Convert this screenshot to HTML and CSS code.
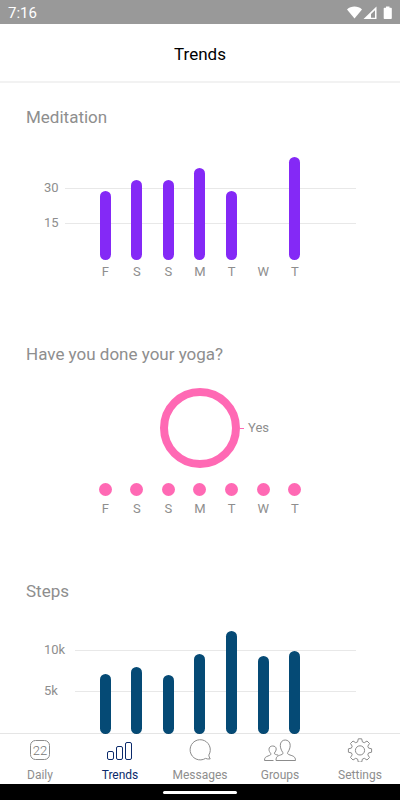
FILE: index.html
```html
<!DOCTYPE html>
<html lang="en">
<head>
  <meta charset="UTF-8">
  <meta name="viewport" content="width=device-width, initial-scale=1.0">
  <title>Trends</title>
  <link rel="stylesheet" href="styles.css">
</head>
<body>
  <div class="status">
    <span>7:16</span>
    <svg class="status-icons" width="46" height="14" viewBox="0 0 46 14" fill="#fff" aria-hidden="true">
      <path d="M0 3.400C4.200-.4 10.800-.4 15 3.400L7.500 12.600z"/>
      <path d="M29.500.500V13H16.500zM28 4.200l-4 3.900v3.600h4z" fill-rule="evenodd"/>
      <path d="M39 .500h3.500v1.300h1.500q.8 0 .8.800v9.600q0 .8-.8.800h-6.500q-.8 0-.8-.8V2.600q0-.8.8-.8h1.500z"/>
    </svg>
  </div>
  <header class="header">
    <h1>Trends</h1>
  </header>

  <main class="content">
    <section>
      <h2>Meditation</h2>
      <div class="chart">
        <div class="axis minutes">
          <div class="tick"><span>30</span></div>
          <div class="tick"><span>15</span></div>
        </div>
        <div class="bars purple">
          <div style="height: 67%"></div>
          <div style="height: 78%"></div>
          <div style="height: 78%"></div>
          <div style="height: 89%"></div>
          <div style="height: 67%"></div>
          <div style="height: 0%"></div>
          <div style="height: 100%"></div>
        </div>
      </div>
      <div class="days">
        <span>F</span><span>S</span><span>S</span><span>M</span><span>T</span><span>W</span><span>T</span>
      </div>
    </section>

    <section>
      <h2>Have you done your yoga?</h2>
      <div class="answer">
        <div class="ring"></div>
        <div class="legend">Yes</div>
      </div>
      <div class="dots">
        <i></i><i></i><i></i><i></i><i></i><i></i><i></i>
      </div>
      <div class="days">
        <span>F</span><span>S</span><span>S</span><span>M</span><span>T</span><span>W</span><span>T</span>
      </div>
    </section>

    <section>
      <h2>Steps</h2>
      <div class="chart">
        <div class="axis steps">
          <div class="tick"><span>10k</span></div>
          <div class="tick"><span>5k</span></div>
        </div>
        <div class="bars blue">
          <div style="height: 58%"></div>
          <div style="height: 65%"></div>
          <div style="height: 57%"></div>
          <div style="height: 78%"></div>
          <div style="height: 100%"></div>
          <div style="height: 76%"></div>
          <div style="height: 81%"></div>
        </div>
      </div>
    </section>
  </main>

  <nav class="tabs">
    <a href="#daily">
      <svg width="34" height="24" viewBox="0 0 34 24">
        <rect x="7.500" y="2.500" width="19" height="19" rx="5"/>
        <text x="17" y="16.500">22</text>
      </svg>
      Daily
    </a>
    <a href="#trends" class="active">
      <svg width="34" height="24" viewBox="0 0 34 24">
        <rect x="4.500" y="13.500" width="6" height="8" rx="1.500"/>
        <rect x="13.500" y="8.500" width="6" height="13" rx="1.500"/>
        <rect x="22.500" y="4.500" width="6" height="17" rx="1.500"/>
      </svg>
      Trends
    </a>
    <a href="#messages">
      <svg width="34" height="24" viewBox="0 0 34 24">
        <path d="M22.500 20.400A10.100 10.100 0 1 1 25.800 17.100Q26 19 27.200 20.900Q24.500 21.300 22.500 20.400z"/>
      </svg>
      Messages
    </a>
    <a href="#groups">
      <svg width="34" height="24" viewBox="0 0 34 24">
        <path d="M13 22.500C13 18.500 14.500 18 17.500 17C20 16.200 20.300 15.500 19.800 14.500C18.300 12.300 17.300 9.800 17.300 7.300C17.300 4 19.500 2 22.200 2S27.200 4 27.200 7.300C27.200 9.800 26.200 12.300 24.700 14.500C24.200 15.500 24.500 16.200 27 17C30 18 32.500 18.500 32.500 22.500z"/>
        <path d="M15.300 17.200C13 16.500 10.900 16.300 11.400 15C12.400 13.700 13.200 12.500 13.200 11C13.200 9 11.600 8 9.700 8S6 9 6 11.300C6 13 6.700 14.200 7.700 15.300C8.300 16.800 7.300 17.200 5 18C2.500 19 1.500 19.500 1.500 22.500H10.500"/>
      </svg>
      Groups
    </a>
    <a href="#settings">
      <svg width="34" height="24" viewBox="0 0 34 24">
        <path d="M15.300.800h3.400l.7 3.100 1.900.8 2.700-1.700 2.500 2.500-1.700 2.700.8 1.900 3 .7v3.400l-3 .7-.8 1.900 1.700 2.700-2.500 2.500-2.700-1.700-1.900.8-.7 3h-3.400l-.7-3-1.900-.8-2.700 1.700-2.500-2.500 1.700-2.700-.8-1.900-3-.7v-3.400l3-.7.8-1.900-1.700-2.700 2.500-2.500 2.700 1.700 1.900-.8z"/>
        <circle cx="17" cy="12.400" r="4.600"/>
      </svg>
      Settings
    </a>
  </nav>
  <div class="system-bar"><span></span></div>
</body>
</html>
```

FILE: styles.css
```css
* {
  box-sizing: border-box;
}
body {
  margin: 0;
  height: 100vh;
  display: flex;
  flex-direction: column;
  background: #fff;
  color: #8e8e8e;
  font-family: Roboto, sans-serif;
  font-size: 13px;
  line-height: 16px;
}
h1, h2 {
  margin: 0;
  font-weight: 400;
  font-size: 17px;
  line-height: 24px;
}

/* top */
.status {
  display: flex;
  justify-content: space-between;
  align-items: center;
  height: 24px;
  padding: 2px 7px 0 8px;
  background: #999;
  color: #fff;
  font-size: 15px;
}
.header {
  padding: 18px 0 15px;
  border-bottom: 2px solid #f2f2f2;
  color: #000;
  text-align: center;
}

/* charts */
.content {
  flex: 1;
  min-height: 0;
  padding-top: 22px;
  overflow-y: auto;
  scrollbar-width: none;
}
section {
  padding-bottom: 62px;
}
h2 {
  padding-left: 26px;
}
.chart {
  display: grid;
  height: 103px;
  margin: 28px 0 4px;
}
.axis, .bars {
  grid-area: 1 / 1;
}
.axis {
  display: flex;
  flex-direction: column;
  padding: 0 44px;
}
.minutes {
  padding-top: 23px;
  gap: 19px;
}
.steps {
  padding-top: 11px;
  gap: 25px;
}
.tick {
  display: flex;
  align-items: center;
}
.minutes span {
  width: 21px;
}
.steps span {
  width: 31px;
}
.tick::after {
  content: "";
  flex: 1;
  height: 1px;
  background: #e8e8e8;
}
.bars, .dots, .days {
  display: flex;
  justify-content: space-around;
  width: 221px;
  margin: 0 auto;
}
.bars {
  align-items: flex-end;
}
.bars div {
  width: 11px;
  border-radius: 6px;
}
.purple div {
  background: #8429f6;
}
.blue div {
  background: #054a75;
}
.days span {
  flex: 1;
  text-align: center;
}
.answer {
  display: grid;
  grid-template-columns: 1fr 80px 1fr;
  align-items: center;
  margin: 22px 0 15px;
}
.ring {
  grid-column: 2;
  height: 80px;
  border: 8px solid #ff69b4;
  border-radius: 50%;
}
.legend {
  display: flex;
  align-items: center;
  gap: 4px;
}
.legend::before {
  content: "";
  width: 4px;
  height: 1px;
  background: #ff69b4;
}
.dots {
  margin-bottom: 5px;
}
.dots i {
  width: 13px;
  height: 13px;
  border-radius: 50%;
  background: #ff69b4;
}

/* bottom */
.tabs {
  display: flex;
  margin-top: -1px;
  padding: 4px 0 1px;
  border-top: 1px solid rgba(0, 0, 0, 0.1);
  background: #fff;
  background-clip: padding-box;
}
.tabs a {
  flex: 1;
  display: flex;
  flex-direction: column;
  align-items: center;
  gap: 5px;
  color: #8e8e8e;
  font-size: 12px;
  text-decoration: none;
}
.tabs svg {
  fill: none;
  stroke: #8c8c8c;
}
.tabs text {
  fill: #777;
  stroke: none;
  font-size: 13px;
  font-weight: 300;
  text-anchor: middle;
}
.tabs .active {
  color: #0b2a6b;
}
.active svg {
  stroke: #0b2a6b;
}
.system-bar {
  display: flex;
  justify-content: center;
  align-items: center;
  height: 16px;
  background: #000;
}
.system-bar span {
  width: 74px;
  height: 3px;
  border-radius: 2px;
  background: #fff;
}
```
